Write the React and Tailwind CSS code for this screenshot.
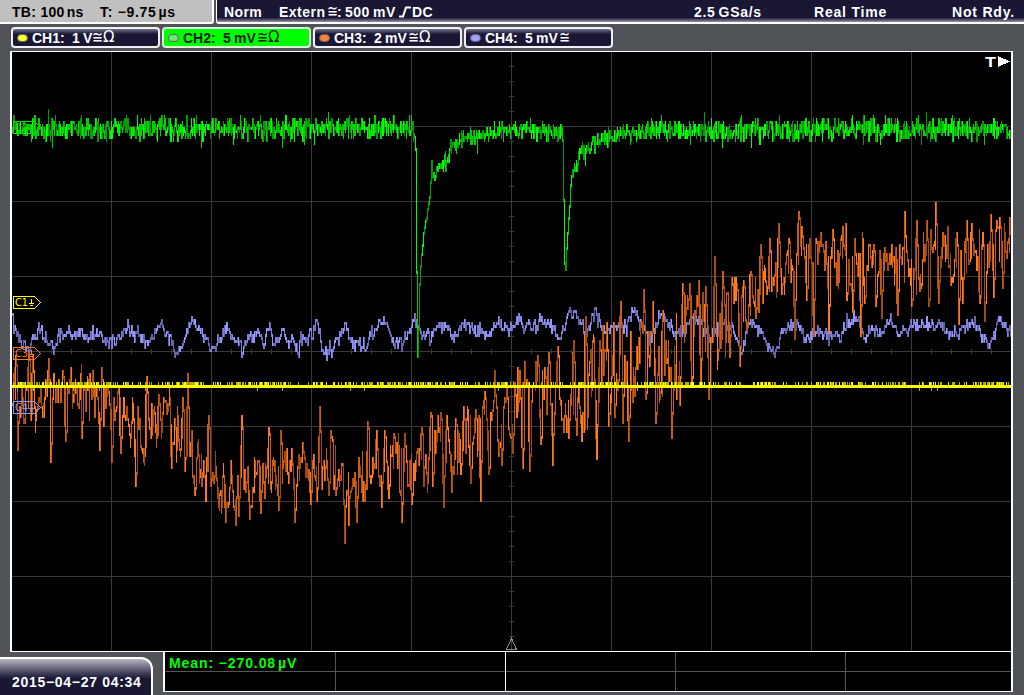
import React from 'react';
import clsx from 'clsx';

const X0 = 12;
const Y0 = 52;
const W = 999;
const H = 599;

// [x, center, half height] of the noisy CH3 band
const CH3_BAND = [
  [12, 390, 22], [50, 393, 28], [100, 398, 32], [130, 432, 28], [160, 412, 25], [185, 435, 35], [200, 458, 30],
  [225, 480, 30], [250, 475, 32], [280, 457, 28], [300, 470, 25], [330, 465, 26], [350, 475, 32], [380, 460, 28],
  [410, 462, 28], [440, 445, 28], [470, 430, 30], [500, 418, 30], [530, 405, 34], [560, 388, 36], [590, 383, 40],
  [620, 368, 42], [650, 350, 42], [680, 350, 40], [710, 325, 38], [740, 305, 30], [760, 280, 24], [780, 262, 20],
  [810, 265, 26], [840, 265, 24], [870, 270, 24], [900, 265, 26], [940, 258, 26], [980, 262, 26], [1011, 250, 26],
];

// [x, y] tips of the CH3 spikes
const CH3_TIPS = [
  [15, 355], [17, 447], [28, 353], [32, 355], [48, 358], [50, 460], [62, 370], [65, 439], [80, 373], [81, 436],
  [89, 373], [99, 447], [101, 367], [111, 460], [120, 451], [126, 407], [135, 484], [146, 376], [158, 394],
  [171, 465], [182, 397], [184, 469], [187, 373], [194, 492], [201, 483], [208, 416], [210, 484], [225, 519],
  [235, 522], [241, 415], [249, 517], [260, 510], [268, 427], [278, 508], [280, 430], [294, 520], [302, 442],
  [310, 501], [316, 499], [319, 406], [328, 492], [330, 430], [335, 493], [344, 541], [348, 523], [356, 520],
  [362, 499], [367, 421], [370, 480], [376, 430], [381, 505], [384, 430], [388, 496], [393, 433], [401, 520],
  [404, 434], [411, 501], [421, 427], [423, 484], [430, 412], [432, 483], [437, 415], [440, 412], [443, 505],
  [446, 415], [451, 489], [455, 418], [460, 472], [463, 406], [470, 481], [475, 409], [480, 499], [484, 391],
  [488, 472], [494, 370], [498, 454], [501, 463], [504, 397], [512, 451], [514, 382], [522, 465], [524, 361],
  [529, 468], [535, 361], [540, 442], [548, 352], [552, 463], [557, 346], [563, 430], [568, 436], [573, 340],
  [581, 439], [585, 316], [596, 457], [599, 340], [606, 322], [608, 424], [613, 322], [614, 415], [620, 301],
  [622, 420], [628, 439], [643, 289], [645, 398], [652, 301], [655, 421], [662, 310], [668, 379], [671, 436],
  [676, 397], [679, 402], [682, 283], [691, 385], [696, 295], [700, 385], [705, 286], [708, 397], [714, 256],
  [717, 357], [722, 271], [729, 355], [731, 277], [736, 283], [739, 363], [743, 280], [746, 328], [750, 271],
  [755, 315], [760, 244], [766, 291], [769, 238], [773, 282], [778, 223], [781, 291], [788, 238], [794, 336],
  [798, 211], [801, 226], [806, 297], [813, 333], [815, 238], [820, 232], [828, 330], [832, 229], [842, 226],
  [845, 223], [846, 297], [852, 309], [854, 238], [860, 335], [864, 300], [873, 244], [875, 303], [881, 315],
  [884, 247], [897, 313], [904, 211], [911, 303], [916, 220], [926, 220], [928, 303], [935, 202], [938, 300],
  [942, 232], [950, 282], [956, 232], [958, 321], [962, 300], [966, 220], [971, 223], [979, 300], [982, 232],
  [984, 318], [990, 214], [993, 294], [996, 220], [999, 217], [1002, 285], [1009, 217],
];

const CH4_LINE = [
  [12, 322], [17, 337], [23, 347], [30, 345], [38, 330], [43, 334], [53, 346], [61, 332], [70, 331], [84, 338],
  [98, 331], [108, 343], [118, 336], [127, 327], [138, 335], [146, 345], [160, 325], [168, 338], [174, 350],
  [180, 349], [191, 318], [201, 334], [210, 346], [219, 340], [226, 329], [235, 341], [242, 350], [256, 328],
  [264, 347], [269, 318], [273, 343], [278, 336], [283, 328], [288, 347], [291, 335], [295, 348], [298, 356],
  [300, 335], [305, 345], [309, 330], [312, 340], [316, 315], [321, 350], [325, 352], [333, 349], [342, 325],
  [352, 343], [365, 347], [374, 328], [386, 324], [393, 341], [403, 342], [409, 330], [414, 321], [420, 333],
  [429, 339], [437, 322], [446, 327], [453, 336], [465, 325], [475, 329], [480, 332], [489, 336], [497, 322],
  [510, 329], [518, 316], [523, 330], [528, 322], [531, 332], [538, 322], [550, 323], [558, 339], [568, 311],
  [574, 317], [582, 327], [586, 335], [594, 313], [602, 330], [617, 327], [626, 327], [633, 310], [640, 323],
  [648, 338], [656, 325], [660, 315], [664, 316], [672, 333], [682, 333], [692, 316], [701, 328], [711, 338],
  [720, 323], [732, 330], [741, 352], [748, 323], [754, 323], [765, 342], [773, 355], [780, 335], [787, 325],
  [800, 329], [805, 340], [815, 334], [827, 336], [839, 340], [846, 322], [853, 316], [860, 325], [864, 338],
  [873, 331], [882, 331], [890, 322], [899, 336], [910, 325], [925, 326], [940, 326], [950, 338], [965, 325],
  [975, 325], [985, 342], [991, 340], [997, 321], [1003, 325], [1011, 335],
];

const CH2_LINE = [
  [12, 128], [200, 128], [412, 127], [414, 136], [415, 150], [416, 270], [417, 355], [418, 330], [419, 285],
  [420, 265], [423, 232], [426, 217], [429, 195], [431, 167], [434, 180], [438, 163], [446, 160], [450, 147],
  [460, 140], [475, 135], [500, 131], [530, 130], [561, 131], [562, 140], [563, 200], [564, 262], [565, 268],
  [566, 247], [569, 205], [571, 178], [575, 165], [580, 150], [590, 145], [600, 138], [620, 133], [650, 130],
  [1011, 128],
];

const CH2_TIPS = [
  [48, 109], [52, 146], [81, 115], [126, 115], [150, 115], [201, 146], [240, 115], [233, 143], [282, 146],
  [304, 142], [328, 112], [314, 143], [409, 115], [477, 150], [494, 121], [530, 118], [585, 162], [651, 118],
  [661, 115], [704, 112], [690, 143], [722, 146], [741, 115], [751, 146], [779, 115], [852, 115], [863, 143],
  [873, 115], [880, 143], [885, 115], [918, 115], [921, 143], [926, 112], [952, 115], [984, 141],
];

const mulberry = (seed) => () => {
  seed = (seed + 0x6d2b79f5) | 0;
  let t = Math.imul(seed ^ (seed >>> 15), 1 | seed);
  t = (t + Math.imul(t ^ (t >>> 7), 61 | t)) ^ t;
  return ((t ^ (t >>> 14)) >>> 0) / 4294967296;
};

const at = (pts, x, k = 1) => {
  let i = 1;
  while (i < pts.length - 1 && pts[i][0] < x) i++;
  const a = pts[i - 1];
  const b = pts[i];
  const t = Math.min(1, Math.max(0, (x - a[0]) / (b[0] - a[0])));
  return a[k] + (b[k] - a[k]) * t;
};

// Samples come in 3px levels, one vertical bar per column, split over three shades
const toPaths = (columns, rand) => {
  const paths = ['', '', ''];
  let prev = columns[0][0];
  columns.forEach((samples, i) => {
    const lo = Math.floor(Math.min(prev, ...samples) / 3) * 3;
    const hi = Math.floor(Math.max(prev, ...samples) / 3) * 3 + 3;
    const r = rand();
    paths[r < 0.25 ? 0 : r < 0.65 ? 1 : 2] += `M${X0 + i + 0.5} ${lo + 1}V${hi + 1}`;
    prev = samples[samples.length - 1];
  });
  return paths;
};

const buildCh3 = () => {
  const rand = mulberry(31);
  const tips = new Map(CH3_TIPS);
  const out = [];
  let drift = 0;
  for (let x = X0; x < X0 + W; x++) {
    const c = at(CH3_BAND, x);
    const h = at(CH3_BAND, x, 2);
    drift = drift * 0.8 + (rand() - 0.5) * h * 0.9;
    const v = c + drift + (rand() - 0.5) * h * 1.3;
    if (tips.has(x)) {
      out.push([v, tips.get(x)]);
    } else if (tips.has(x - 1)) {
      out.push([c + (tips.get(x - 1) - c) * (0.4 + rand() * 0.5)]);
    } else if (tips.has(x + 1)) {
      out.push([c + (tips.get(x + 1) - c) * (0.3 + rand() * 0.5)]);
    } else {
      out.push(rand() < 0.4 ? [v + (rand() - 0.5) * h, v] : [v]);
    }
  }
  return toPaths(out, rand);
};

const buildCh4 = () => {
  const rand = mulberry(7);
  const out = [];
  for (let x = X0; x < X0 + W; x++) {
    const c = at(CH4_LINE, x) - 1;
    out.push([c + (rand() + rand() - 1) * 9]);
  }
  return toPaths(out, rand);
};

const buildCh2 = () => {
  const rand = mulberry(99);
  const tips = new Map(CH2_TIPS);
  const out = [];
  for (let x = X0; x < X0 + W; x++) {
    const c = at(CH2_LINE, x);
    const dip = (x > 413 && x < 430) || (x > 561 && x < 570);
    const settling = (x >= 430 && x < 560) || (x >= 570 && x < 640);
    const amp = dip ? 1 : settling ? 10 : 13;
    const v = c + (rand() + rand() - 1) * amp;
    const w = c + (rand() + rand() - 1) * amp;
    if (tips.has(x)) out.push([tips.get(x), w]);
    else out.push(dip ? [v] : [v, w]);
  }
  return toPaths(out, rand);
};

const buildCh1 = () => {
  const rand = mulberry(5);
  let bright = '';
  let dim = '';
  for (let x = X0; x < X0 + W; x++) {
    const dense = Math.sin(x / 31) + Math.sin(x / 13) > 0.2 ? 0.65 : 0.33;
    if (rand() < dense) {
      if (rand() < 0.4) bright += `M${x + 0.5} 382V385`;
      else dim += `M${x + 0.5} 382V385`;
    }
    if (rand() < 0.02) dim += `M${x + 0.5} 388V391`;
  }
  return { bright, dim };
};

const ch1 = buildCh1();
const traces = [
  { name: 'ch4', paths: buildCh4(), shades: ['#9696ff', '#8080d8', '#6464aa'] },
  { name: 'ch3', paths: buildCh3(), shades: ['#ff7a1e', '#cc5c12', '#a04a10'] },
];
const ch2 = { name: 'ch2', paths: buildCh2(), shades: ['#00ff00', '#00d000', '#009c00'] };

const Trace = ({ trace }) => (
  <g>
    {trace.paths.map((d, i) => (
      <path key={trace.name + i} d={d} stroke={trace.shades[i]} />
    ))}
  </g>
);

const Grid = () => {
  const cols = [111, 211, 311, 411, 511, 611, 711, 811, 911];
  const rows = [126, 201, 276, 351, 426, 501, 576];
  let d = '';
  cols.forEach((x) => (d += `M${x + 0.5} 52V651`));
  rows.forEach((y) => (d += `M12 ${y + 0.5}H1011`));
  for (let x = 31; x < 1011; x += 20) d += `M${x + 0.5} 349V354`;
  for (let y = 66; y < 651; y += 15) d += `M509 ${y + 0.5}H514`;
  return <path d={d} stroke="#3a3a3a" />;
};

const Marker = ({ y, color, label }) => (
  <g stroke={color}>
    <path d={`M13.5 ${y + 0.5}H34.5L40.5 ${y + 6.5}L34.5 ${y + 12.5}H13.5Z`} />
    <text
      x="15"
      y={y + 10}
      fill={color}
      stroke="none"
      fontSize="10"
      fontWeight="normal"
      fontFamily="DejaVu Sans, sans-serif"
      textLength="13"
      lengthAdjust="spacingAndGlyphs"
    >
      {label}
    </text>
    <path d={`M31.5 ${y + 3}V${y + 7}M29 ${y + 7.5}H34M30 ${y + 9.5}H33`} />
  </g>
);

const Screen = () => (
  <svg
    width={W}
    height={H}
    viewBox={`${X0} ${Y0} ${W} ${H}`}
    fill="none"
    shapeRendering="crispEdges"
    className="block bg-black"
  >
    <Grid />
    {traces.map((t) => (
      <Trace key={t.name} trace={t} />
    ))}
    <path d="M12 386.5H1011" stroke="#ffff00" strokeWidth="3" />
    <path d={ch1.bright} stroke="#ffff00" />
    <path d={ch1.dim} stroke="#b4b400" />
    <Trace trace={ch2} />
    <Marker y={121} color="#00e600" label="C2" />
    <Marker y={296} color="#ffff00" label="C1" />
    <Marker y={347} color="#ff7a1e" label="C3" />
    <Marker y={401} color="#9696ff" label="C4" />
    <path d="M511.5 638.5L506.5 649.5H516.5Z" stroke="#8c8c8c" />
    <text
      x="985"
      y="67"
      fill="#fff"
      fontSize="15"
      fontWeight="bold"
      fontFamily="Liberation Sans, sans-serif"
      textLength="11"
      lengthAdjust="spacingAndGlyphs"
    >
      T
    </text>
    <path d="M998 56V67L1010 61.5Z" fill="#fff" />
  </svg>
);

const Approx = () => (
  <span className="w-[10px] font-['DejaVu_Sans'] text-[13px] font-normal tracking-normal">
    <span className="inline-block origin-center scale-y-130">≅</span>
  </span>
);
const Ohm = () => (
  <span className="ml-[1px] font-['DejaVu_Sans'] text-[15px] font-normal tracking-normal">Ω</span>
);

const channels = [
  { name: 'CH1:', value: '1', unit: 'V', unitWidth: 'w-[9px]', ohm: true, led: 'bg-[#ffff20]' },
  { name: 'CH2:', value: '5', unit: 'mV', unitWidth: 'w-[23px]', ohm: true, led: 'bg-[#70e870]', active: true },
  { name: 'CH3:', value: '2', unit: 'mV', unitWidth: 'w-[23px]', ohm: true, led: 'bg-[#ff8030]' },
  { name: 'CH4:', value: '5', unit: 'mV', unitWidth: 'w-[23px]', ohm: false, led: 'bg-[#a0a0ff]' },
];

const ChannelButton = ({ channel }) => (
  <div
    className={clsx(
      'flex h-[21px] w-[149px] items-center rounded-[4px] border-2 pl-[4px] leading-none',
      channel.active
        ? 'border-[#d8f8d8] bg-[#00ff00] text-[#102010]'
        : 'border-[#f0f0f4] bg-linear-to-b from-[#77758a] via-[#1a1735] via-30% to-[#1a1735] text-white'
    )}
  >
    <span className={clsx('h-[8px] w-[11px] rounded-full border border-[#606070]', channel.led)} />
    <span className="ml-[4px] w-[40px]">{channel.name}</span>
    <span className="w-[9px]">{channel.value}</span>
    <span className={clsx('ml-[2px]', channel.unitWidth)}>{channel.unit}</span>
    <Approx />
    {channel.ohm && <Ohm />}
  </div>
);

const App = () => {
  return (
    <div className="flex h-[695px] w-[1024px] flex-col overflow-hidden bg-[#505458] font-['Liberation_Sans',sans-serif] text-[14px] font-bold whitespace-nowrap text-white">
      {/* Status bar */}
      <header className="flex h-[24px] gap-[2px] leading-[24px]">
        <div className="flex w-[214px] rounded-br-[3px] border-r-2 border-b-2 border-white bg-[#c0c0c0] pl-[12px] text-black">
          <span className="w-[88px] tracking-[0.3px]">TB: 100<span className="ml-[2px]">ns</span></span>
          <span className="tracking-[0.7px]">T: −9.75<span className="ml-[2px]">µs</span></span>
        </div>
        <div className="flex flex-1 rounded-bl-[3px] border-b-2 border-l border-white bg-linear-to-b from-[#1a1735] via-[#1a1735] via-80% to-[#9896a8] pl-[7px]">
          <span className="w-[55px] tracking-[0.4px]">Norm</span>
          <span className="flex w-[415px]">
            <span className="w-[48px] tracking-[0.5px]">Extern</span>
            <Approx />
            <span className="w-[8px]">:</span>
            <span className="w-[28px] tracking-[0.5px]">500</span>
            <span className="w-[26px] tracking-[0.6px]">mV</span>
            <svg width="13" height="24" viewBox="0 0 13 24" fill="none" className="block">
              <path d="M0 16.5H4L7 7.5H12" stroke="#fff" strokeWidth="2" />
            </svg>
            <span className="tracking-[0.3px]">DC</span>
          </span>
          <span className="w-[120px] tracking-[0.7px]">2.5<span className="ml-[3px]">GSa/s</span></span>
          <span className="w-[138px] tracking-[0.8px]">Real Time</span>
          <span className="tracking-[0.8px]">Not Rdy.</span>
        </div>
      </header>

      {/* Channels */}
      <nav className="flex h-[27px] gap-[2px] pt-[3px] pl-[11px]">
        {channels.map((c) => (
          <ChannelButton key={c.name} channel={c} />
        ))}
      </nav>

      {/* Waveforms */}
      <main className="ml-[10px] h-[601px] w-[1003px] border-x-2 border-y border-white">
        <Screen />
      </main>

      {/* Date and measurements */}
      <footer className="flex h-[43px]">
        <div className="mt-[5px] h-[38px] w-[153px] rounded-tr-[12px] border-t-2 border-r-2 border-white bg-linear-to-b from-[#b8b7c2] via-[#1a1735] via-55% to-[#1a1735] pt-[13px] pl-[12px] leading-[20px] tracking-[0.7px]">
          2015−04−27 04:34
        </div>
        <div className="ml-[10px] flex h-[40px] w-[850px] border-r-2 border-b border-l-2 border-white bg-black">
          {['w-[171px]', 'w-[170px]', 'w-[170px]', 'w-[170px]', 'flex-1'].map((w, i) => (
            <div
              key={i}
              className={clsx(w, 'flex flex-col', i < 4 && 'border-r', i === 1 ? 'border-white' : 'border-[#555]')}
            >
              <div className="h-[20px] border-b border-[#555] pl-[4px] leading-[22px] text-[#00ff00]">
                {i === 0 && (
                  <span className="tracking-[0.9px]">Mean: −270.08<span className="ml-[2px]">µV</span></span>
                )}
              </div>
            </div>
          ))}
        </div>
      </footer>
    </div>
  );
};

export default App;
